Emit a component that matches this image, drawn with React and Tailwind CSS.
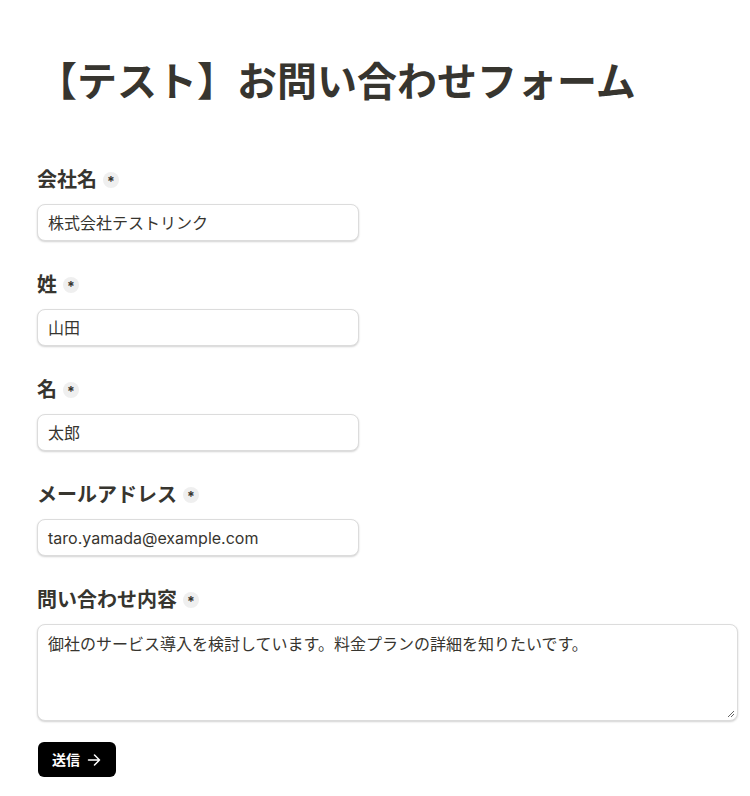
import React from "react";

const font = { fontFamily: '"Inter", "Noto Sans CJK JP", sans-serif' };

function Label({ children }) {
  return (
    <div className="flex items-center h-[28px]">
      <span className="text-[20px] leading-[28px] font-bold text-[#37352f]">{children}</span>
      <span className="ml-[6px] w-[16px] h-[16px] rounded-full bg-[#efefef] flex items-center justify-center text-[14px] font-bold text-[#37352f] leading-none pt-[4px]">*</span>
    </div>
  );
}

function Field({ label, value }) {
  return (
    <div className="mb-[30px]">
      <Label>{label}</Label>
      <div className="mt-[10px] w-[322px] h-[37px] rounded-lg border border-[#dcdcdc] bg-white shadow-[0_1px_2px_rgba(0,0,0,0.18)] px-[10px] flex items-center text-[16px] text-[#37352f]">
        {value}
      </div>
    </div>
  );
}

export default function App() {
  return (
    <div className="bg-white min-h-[796px] pl-[37px] pr-[12px] pt-[58px]" style={font}>
      <h1 className="text-[40px] leading-[48px] font-bold text-[#37352f] mb-[60px]">【テスト】お問い合わせフォーム</h1>
      <Field label="会社名" value="株式会社テストリンク" />
      <Field label="姓" value="山田" />
      <Field label="名" value="太郎" />
      <Field label="メールアドレス" value="taro.yamada@example.com" />
      <div>
        <Label>問い合わせ内容</Label>
        <div className="relative mt-[10px] w-[701px] h-[97px] rounded-lg border border-[#dcdcdc] bg-white shadow-[0_1px_2px_rgba(0,0,0,0.18)] px-[10px] pt-[7px] text-[16px] leading-[24px] text-[#37352f]">
          御社のサービス導入を検討しています。料金プランの詳細を知りたいです。
          <svg className="absolute right-[2px] bottom-[2px]" width="8" height="8" viewBox="0 0 8 8">
            <path d="M7 1 L1 7 M7 4 L4 7" stroke="#666" strokeWidth="1" />
          </svg>
        </div>
      </div>
      <button className="mt-[21px] ml-[1px] h-[35px] w-[78px] rounded-md bg-black text-white flex items-center pl-[14px] text-[14px] font-bold gap-[7px]">
        <span>送信</span>
        <svg width="14" height="14" viewBox="0 0 14 14" fill="none" stroke="white" strokeWidth="1.5" strokeLinecap="round" strokeLinejoin="round">
          <path d="M1.5 7h11M7.5 2l5 5-5 5" />
        </svg>
      </button>
    </div>
  );
}
